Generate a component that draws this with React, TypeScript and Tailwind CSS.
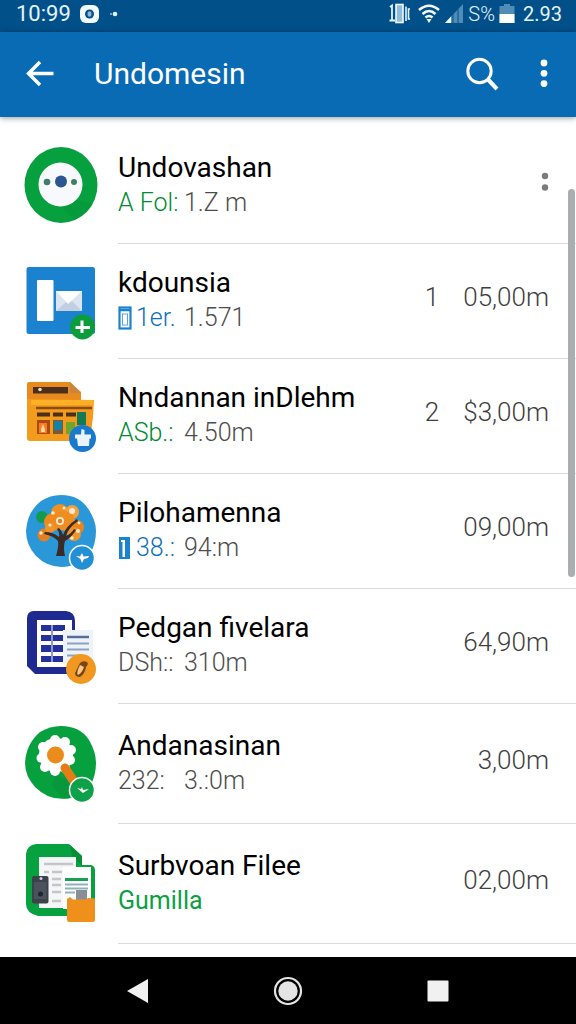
import type { ReactNode } from "react";

type Row = {
  title: string;
  tag: string;
  tagColor: string;
  boxed?: "outline" | "filled";
  value?: string;
  count?: string;
  amount?: string;
  height: string;
  icon: ReactNode;
};

const svgProps = {
  viewBox: "0 0 80 80",
  className: "mt-[18px] h-20 w-20 shrink-0",
  "aria-hidden": true,
} as const;

function FaceIcon() {
  return (
    <svg {...svgProps}>
      <ellipse cx="41" cy="38" rx="36.500" ry="38" fill="#06a03f" />
      <path d="M56 53 L41 60 L54 73 Q66 69 73 57 Z" fill="#058f35" opacity=".35" />
      <circle cx="40.500" cy="37.500" r="22" fill="#f7f9fd" />
      <circle cx="27" cy="35" r="3.300" fill="#3f7f68" />
      <circle cx="41" cy="34.500" r="6" fill="#2d5590" />
      <circle cx="54" cy="35" r="3" fill="#3f7f68" />
    </svg>
  );
}

function MailIcon() {
  return (
    <svg {...svgProps}>
      <rect x="6.500" y="5" width="68.500" height="67" rx="2.500" fill="#1b82cf" />
      <rect x="17" y="18" width="16.500" height="41" rx="1" fill="#fff" />
      <rect x="36" y="29" width="26" height="20" fill="#dbe4f0" />
      <path d="M36 29 H62 L48 42 Z" fill="#fff" />
      <path d="M36 49 L46 40 L48 42 L52 39 L62 49 Z" fill="#c2cfe2" />
      <circle cx="62.500" cy="65" r="12.500" fill="#0b9c3c" />
      <path d="M62 58.500 V71 M55.500 65.500 H70" stroke="#fff" strokeWidth="3" />
    </svg>
  );
}

function StoreIcon() {
  return (
    <svg {...svgProps}>
      <path d="M9 5 H50 L61 15 V30 H7 V7 Q7 5 9 5 Z" fill="#e88a1d" />
      <path d="M50 5 L61 16 H50 Z" fill="#c98642" />
      <rect x="13" y="10" width="35" height="6.500" fill="#4b2f1c" />
      <circle cx="20" cy="12.500" r="1.800" fill="#f0d9c0" />
      <path d="M7 22 L74 23 L73 40 L70 64 H10 Q7 64 7 61 Z" fill="#f39b1c" />
      <path d="M11 23 H72 Q75 24 73.500 28 H11 Z" fill="#fbb025" />
      <path d="M16 31 H72" stroke="#8a4c12" strokeWidth="2.500" />
      <path d="M17 37.500 H30 M33 37.500 H43 M46 37.500 H56" stroke="#4b2f1c" strokeWidth="4" />
      <rect x="17" y="43" width="13" height="14" fill="#a84b12" />
      <rect x="19" y="46" width="8" height="10" fill="#ff7a1f" />
      <path d="M21 52 L23 47 L25 52 V55 H21 Z" fill="#ffd6a0" />
      <rect x="33" y="43" width="10" height="14" fill="#7a5a32" />
      <rect x="34" y="44" width="8" height="9" fill="#1680a6" />
      <rect x="46" y="45" width="9" height="12" fill="#6fa52e" />
      <rect x="57" y="35" width="9" height="13" fill="#147a55" />
      <circle cx="62.500" cy="61.500" r="13.500" fill="#1979cc" />
      <path d="M55 57.500 H61 L61.500 52 L64.500 53 V57.500 H71 V61.500 H69.500 L69 69 H58 L57 61.500 H55 Z" fill="#eaf4ff" />
    </svg>
  );
}

function TreeIcon() {
  return (
    <svg {...svgProps}>
      <path d="M41 3 Q60 3 69 18 Q76 29 76 39 Q76 52 70 62 L50 74 Q30 78 16 64 Q6 53 6 39 Q7 20 21 9 Q30 3 41 3 Z" fill="#2a98d8" />
      <circle cx="22" cy="25" r="6" fill="#129b50" />
      <circle cx="40" cy="21" r="9" fill="#ef9120" />
      <circle cx="52" cy="20" r="7" fill="#f3a13c" />
      <circle cx="33" cy="30" r="9" fill="#f08a1e" />
      <circle cx="45" cy="29" r="10" fill="#ee8e22" />
      <circle cx="57" cy="35" r="7" fill="#e9851b" />
      <circle cx="54" cy="42" r="7" fill="#ef9428" />
      <circle cx="24" cy="43" r="6.500" fill="#e3801f" />
      <circle cx="30" cy="36" r="5" fill="#ef9428" />
      <g fill="#fde9cf">
        <circle cx="40" cy="29" r="4" />
        <circle cx="52" cy="19" r="3" />
        <circle cx="33" cy="21" r="1.800" />
        <circle cx="44" cy="16" r="1.500" />
        <circle cx="58" cy="39" r="2" />
        <circle cx="52" cy="46" r="1.800" />
        <circle cx="21" cy="41" r="1.700" />
        <circle cx="59" cy="31" r="1.400" />
        <circle cx="30" cy="33" r="1.600" />
      </g>
      <circle cx="40" cy="29" r="2.200" fill="#e3801f" />
      <path d="M36 64 Q39 54 38 49 Q34 44 24 42 L25 40 Q33 40 39 45 Q40 41 37 37 L39 36 Q42 39 43 43 Q46 34 57 27 L58 29 Q48 36 46 44 Q51 42 54 37 L56 38 Q52 45 45 49 Q43 55 45 64 Z" fill="#3b2b28" />
      <circle cx="62" cy="66" r="12.500" fill="#2390d6" stroke="#fff" strokeWidth="1.500" />
      <path d="M56 64 L60 64.500 L62 61 L63.500 64.500 L69 64 L68 66 L64 67 L62 71 L60.500 67 Z" fill="#fff" />
    </svg>
  );
}

function SheetIcon() {
  return (
    <svg {...svgProps}>
      <path d="M13 4 H46 Q55 5 55 14 V67 H15 L7 59 V11 Q7 5 13 4 Z" fill="#1e2a90" />
      <rect x="17" y="13" width="35" height="47" fill="#fff" />
      <g fill="#25319a">
        <rect x="21" y="18" width="10" height="6" />
        <rect x="33" y="18" width="12" height="6" />
        <rect x="21" y="28" width="10" height="6" />
        <rect x="33" y="28" width="10" height="6" />
        <rect x="21" y="38" width="10" height="7" />
        <rect x="33" y="38" width="10" height="7" />
        <rect x="21" y="49" width="10" height="6" />
        <rect x="33" y="49" width="10" height="6" />
      </g>
      <path d="M32 18 V55" stroke="#25319a" strokeWidth="1" />
      <rect x="43" y="23" width="30" height="34" fill="#eef3fa" />
      <path d="M47 30 H69" stroke="#53709a" strokeWidth="2.500" />
      <path d="M47 36.500 H69 M47 42.500 H69 M47 48.500 H60" stroke="#8ca3bf" strokeWidth="2" />
      <circle cx="61" cy="62" r="15" fill="#f0981f" />
      <path d="M60 56 Q63 53 67 55 Q69 57 66 60 Q65 67 60 70 Q55 70 55 66 Z" fill="#7a4417" />
      <path d="M60 58 L64 60 Q62 66 58 68 Q56 66 60 58 Z" fill="#fbc987" />
    </svg>
  );
}

function FlowerIcon() {
  return (
    <svg {...svgProps}>
      <path d="M41 4 Q60 4 69 18 Q76 30 76 41 Q76 54 70 64 L50 76 Q30 80 15 65 Q5 54 5 41 Q6 22 20 10 Q30 4 41 4 Z" fill="#06a03f" />
      <path d="M36 54 L48 58 L56 74 Q50 78 42 76 L32 62 Z" fill="#058f35" opacity=".5" />
      <g fill="#fff">
        <circle cx="36" cy="33" r="17" />
        <circle cx="35" cy="18" r="5" />
        <circle cx="45" cy="20" r="5" />
        <circle cx="51" cy="28" r="5" />
        <circle cx="50" cy="38" r="5" />
        <circle cx="45" cy="46" r="5" />
        <circle cx="35" cy="49" r="5" />
        <circle cx="25" cy="45" r="5" />
        <circle cx="21" cy="36" r="4.500" />
        <circle cx="23" cy="25" r="5" />
      </g>
      <circle cx="35.500" cy="33" r="8.500" fill="#ea8c1c" />
      <path d="M45 46 L57 64" stroke="#e47c17" strokeWidth="9" strokeLinecap="round" />
      <circle cx="62" cy="68" r="12.500" fill="#0fa04a" stroke="#fff" strokeWidth="1.500" />
      <path d="M57 66 L61 67 L62 65 L63 68 L69 67 L63 71 Z" fill="#fff" />
    </svg>
  );
}

function FilesIcon() {
  return (
    <svg {...svgProps}>
      <path d="M16 2 H49 L62 14 V23 H71 Q75 24 75 28 V74 H18 Q6 71 6 62 V12 Q7 3 16 2 Z" fill="#08a140" />
      <path d="M50 3 L62 14 V23 L52 14 Z" fill="#078f38" />
      <rect x="19" y="15" width="37" height="51" fill="#f4f6f7" />
      <path d="M24 22 H53 M24 30 H29 M32 30 H42 M32 37 H41 M32 43 H41 M32 50 H41 M32 59 H41" stroke="#c3c7ca" strokeWidth="2.500" />
      <rect x="43" y="25" width="28" height="42" fill="#fff" />
      <path d="M45 37.500 H68" stroke="#19a052" strokeWidth="3" />
      <path d="M45 42.500 H68 M45 46.500 H68 M45 50.500 H55" stroke="#8fb3bd" strokeWidth="1.800" />
      <rect x="56" y="48" width="11" height="10" fill="#8a8f95" />
      <rect x="12" y="34" width="16.500" height="27.500" rx="2" fill="#3b424a" />
      <rect x="14" y="40" width="12.500" height="17" fill="#4a525b" />
      <circle cx="20.500" cy="52" r="2.500" fill="#20252b" />
      <circle cx="21" cy="36.500" r="1.500" fill="#cdd3d8" />
      <path d="M47 57 L50 55 L53 57.500 H66 L68 56 L75 56.500 V78 Q75 80 73 80 H49 Q47 80 47 78 Z" fill="#f0901c" />
    </svg>
  );
}

const GREEN = "text-[#008a33]";
const BLUE = "text-[#0f70b8]";
const GREY = "text-[#4d4d4d]";

const rows: Row[] = [
  { title: "Undovashan", tag: "A Fol:", tagColor: GREEN, value: "1.Z m", height: "h-[115px]", icon: <FaceIcon /> },
  { title: "kdounsia", tag: "1er.", tagColor: BLUE, boxed: "outline", value: "1.571", count: "1", amount: "05,00m", height: "h-[115px]", icon: <MailIcon /> },
  { title: "Nndannan inDlehm", tag: "ASb.:", tagColor: GREEN, value: "4.50m", count: "2", amount: "$3,00m", height: "h-[115px]", icon: <StoreIcon /> },
  { title: "Pilohamenna", tag: "38.:", tagColor: BLUE, boxed: "filled", value: "94:m", amount: "09,00m", height: "h-[115px]", icon: <TreeIcon /> },
  { title: "Pedgan fivelara", tag: "DSh::", tagColor: GREY, value: "310m", amount: "64,90m", height: "h-[115px]", icon: <SheetIcon /> },
  { title: "Andanasinan", tag: "232:", tagColor: GREY, value: "3.:0m", amount: "3,00m", height: "h-[120px]", icon: <FlowerIcon /> },
  { title: "Surbvoan Filee", tag: "Gumilla", tagColor: "font-normal text-[#0c9f40]", amount: "02,00m", height: "h-[120px]", icon: <FilesIcon /> },
];

function TagBox({ kind }: { kind: "outline" | "filled" }) {
  return (
    <svg viewBox="0 0 14 24" className="mr-1 h-6 w-[14px] shrink-0" aria-hidden>
      {kind === "outline" ? (
        <>
          <rect x="1.500" y="1.500" width="11" height="21" fill="none" stroke="#1b82cf" strokeWidth="2.200" />
          <path d="M1 4 H13" stroke="#1b82cf" strokeWidth="2.500" />
          <rect x="4.500" y="8" width="5" height="11" fill="none" stroke="#5aa7de" strokeWidth="1" />
        </>
      ) : (
        <>
          <rect x="1" y="1" width="11" height="22" fill="#1b82cf" />
          <path d="M3 4 H7 V21 H4.500 V6 H3 Z" fill="#fff" />
        </>
      )}
    </svg>
  );
}

function StatusBar() {
  return (
    <div className="flex h-8 items-center justify-between bg-[#02508a] pr-3.5 pb-1 pl-4 text-[#e4f3fb]">
      <div className="flex items-center">
        <span className="text-[22px] leading-7">10:99</span>
        <svg viewBox="0 0 44 20" className="ml-2 h-5 w-11" aria-hidden>
          <rect x="1" y="1" width="19" height="18" rx="6" fill="#f2fbff" />
          <circle cx="10.500" cy="10" r="4.500" fill="#02508a" />
          <ellipse cx="10.500" cy="10" rx="2" ry="2.800" fill="#8fb6d1" />
          <circle cx="36" cy="10" r="2.300" fill="#e4f3fb" />
          <circle cx="32" cy="10" r="1" fill="#9cc3dc" />
        </svg>
      </div>
      <div className="flex items-center">
        <svg viewBox="0 0 76 22" className="mr-1 h-[22px] w-[76px]" aria-hidden>
          <path d="M2 4 L4 2.500 V17 M1.500 17.500 H7" stroke="#e4f3fb" strokeWidth="1.800" fill="none" />
          <rect x="8" y="1.500" width="7" height="18" fill="#8fbcd8" stroke="#f2fbff" strokeWidth="1.600" />
          <path d="M18 3.500 V18 M22 6 H20.500 V16 H22" stroke="#e4f3fb" strokeWidth="1.600" fill="none" />
          <g fill="none" stroke="#f2fbff" strokeWidth="2.600">
            <path d="M31 7 Q41 -1.500 51 7" />
            <path d="M34.500 11 Q41 5 47.500 11" />
            <path d="M37.500 14.500 Q41 11.500 44.500 14.500" />
          </g>
          <path d="M38.500 16 H43.500 L41 20 Z" fill="#f2fbff" />
          <path d="M57 20 L75 1 V20 Z" fill="#4f8db6" />
          <path d="M57 20 L63 13.500 V20 Z" fill="#f2fbff" />
          <path d="M65 11 V20 M70 6 V20" stroke="#02508a" strokeWidth="1" />
        </svg>
        <span className="text-[20px] leading-7 font-light">S%</span>
        <svg viewBox="0 0 16 22" className="mr-2 ml-1 h-[22px] w-4" aria-hidden>
          <path d="M5 1 H11 V3 H15.500 V20 H.5 V3 H5 Z" fill="#4f8db6" />
          <path d="M.5 11 H15.500 V20 H.5 Z" fill="#fff" />
        </svg>
        <span className="text-[20px] leading-7">2.93</span>
      </div>
    </div>
  );
}

function AppBar() {
  return (
    <header className="relative z-10 flex h-[85px] items-center bg-[#086bb3] pb-0.5 pl-5 text-white shadow-[0_1px_6px_rgba(0,0,0,0.4)]">
      <button aria-label="Back" className="flex h-10 w-10 items-center justify-center">
        <svg viewBox="0 0 28 28" className="h-7 w-7" fill="none" stroke="currentColor" strokeWidth="3.400">
          <path d="M27.500 13.500 H3 M14 2 L2.500 13.500 L14 25" />
        </svg>
      </button>
      <h1 className="ml-[34px] flex-1 text-[30px] leading-9">Undomesin</h1>
      <button aria-label="Search" className="flex h-12 w-12 items-center justify-center">
        <svg viewBox="0 0 34 34" className="h-[34px] w-[34px]" fill="none" stroke="currentColor">
          <circle cx="14.500" cy="14" r="11.700" strokeWidth="3" />
          <path d="M23 22.500 L32 32" strokeWidth="4" />
        </svg>
      </button>
      <button aria-label="More options" className="mr-2 ml-3.5 flex h-12 w-12 items-center justify-center">
        <svg viewBox="0 0 8 30" className="h-[30px] w-2" fill="currentColor">
          <circle cx="4" cy="4" r="3.400" />
          <circle cx="4" cy="14.300" r="3.400" />
          <circle cx="4" cy="24.600" r="3.400" />
        </svg>
      </button>
    </header>
  );
}

function ListRow({ row }: { row: Row }) {
  return (
    <li className={`flex pl-5 ${row.height}`}>
      {row.icon}
      <div className="ml-[18px] flex min-w-0 flex-1 items-center border-b border-[#d9dadb] pr-[27px] pb-0.5">
        <div className="min-w-0 flex-1">
          <h2 className="text-[28px] leading-9 whitespace-nowrap text-black">{row.title}</h2>
          <p className="flex h-[34px] items-center text-[25px] leading-[34px] font-light whitespace-nowrap">
            <span className={`flex min-w-[66px] items-center ${row.tagColor}`}>
              {row.boxed && <TagBox kind={row.boxed} />}
              {row.tag}
            </span>
            {row.value && <span className="text-[#4d4d4d]">{row.value}</span>}
          </p>
        </div>
        <div className="flex items-center gap-6 pb-1.5 text-[26px] leading-9 font-light text-[#404040]">
          {row.count && <span>{row.count}</span>}
          {row.amount ? (
            <span>{row.amount}</span>
          ) : (
            <button aria-label="Row options" className="flex h-10 w-2 items-center justify-center">
              <svg viewBox="0 0 8 22" className="h-[22px] w-2" fill="#7b7b7b">
                <circle cx="4" cy="5" r="3.200" />
                <circle cx="4" cy="16.500" r="3.200" />
              </svg>
            </button>
          )}
        </div>
      </div>
    </li>
  );
}

export default function App() {
  return (
    <div className="flex min-h-screen flex-col bg-white font-['Roboto',sans-serif]">
      <StatusBar />
      <AppBar />
      <main className="relative flex-1">
        <ul className="pt-3">
          {rows.map((r) => (
            <ListRow key={r.title} row={r} />
          ))}
        </ul>
        <div className="absolute top-[72px] right-px h-[388px] w-[7px] rounded-full bg-[#a9afb0]" />
      </main>
      <nav className="flex h-[67px] items-center justify-center bg-black">
        <button aria-label="Back" className="flex h-full w-[150px] items-center justify-center">
          <svg viewBox="0 0 24 28" className="h-7 w-6">
            <path d="M1 14 L22 2 V26 Z" fill="#f1f1f1" />
          </svg>
        </button>
        <button aria-label="Home" className="flex h-full w-[150px] items-center justify-center">
          <svg viewBox="0 0 30 30" className="h-[30px] w-[30px]">
            <circle cx="15" cy="15" r="13" fill="none" stroke="#e4e4e4" strokeWidth="2.200" />
            <circle cx="15" cy="15" r="9.700" fill="#e4e4e4" />
          </svg>
        </button>
        <button aria-label="Recents" className="flex h-full w-[150px] items-center justify-center">
          <svg viewBox="0 0 22 22" className="h-[22px] w-[22px]">
            <rect x=".5" y=".5" width="21" height="21" rx="1" fill="#f1f1f1" />
          </svg>
        </button>
      </nav>
    </div>
  );
}
